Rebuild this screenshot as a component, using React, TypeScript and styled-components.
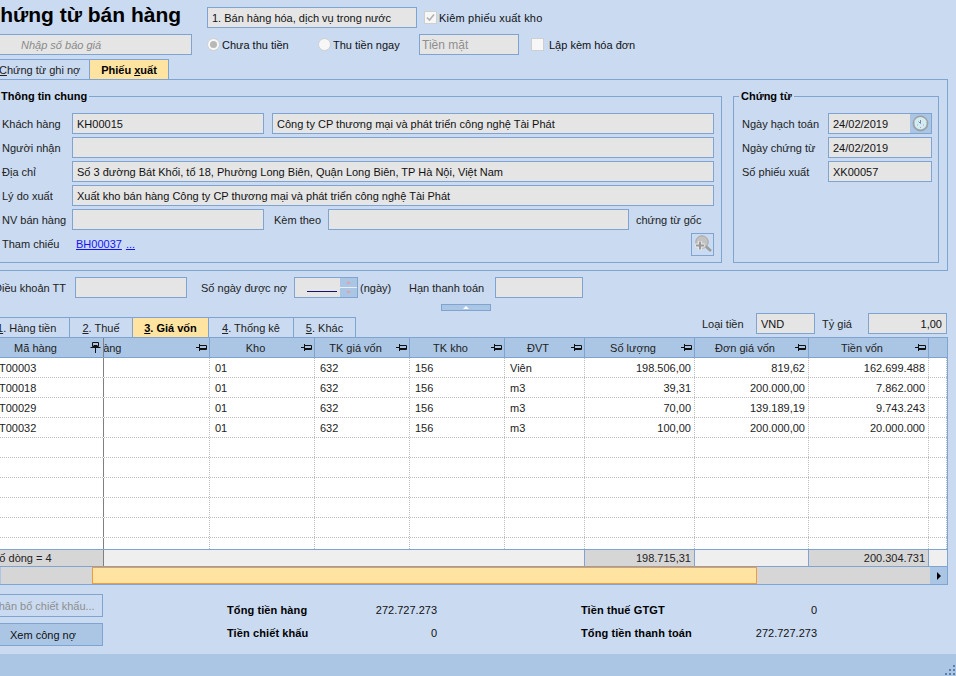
import React from "react";
import styled, { createGlobalStyle } from "styled-components";

const BG = "#c9daf1";
const BLUE = "#abc6e5";
const LINE = "#7fa4d2";
const FIELD = "#e5e5e5";
const YELLOW = "#ffe3a0";

const Global = createGlobalStyle`
  html, body { margin: 0; padding: 0; background: ${BG}; }
  * { box-sizing: border-box; }
  body { font-family: "Liberation Sans", Arial, sans-serif; font-size: 11px; color: #111; }
`;

const Page = styled.div`
  width: 956px; height: 676px; overflow: hidden; display: flex; flex-direction: column; background: ${BG};
`;
const Main = styled.div`
  flex: 1; width: 976px; margin-left: -20px; display: flex; flex-direction: column;
`;
const TopRow = styled.div<{ $mt: number }>`
  display: flex; align-items: center; height: 21px; margin-top: ${p => p.$mt}px; flex: none;
`;
const Title = styled.h1`
  width: 227px; margin: -5px 0 0; padding-left: 5px; font-size: 21px; font-weight: 700; color: #000; line-height: 24px; white-space: nowrap;
`;
const Field = styled.div<{ $w: number; $align?: string; $ml?: number }>`
  flex: none; width: ${p => p.$w}px; height: 21px; margin-left: ${p => p.$ml ?? 0}px; padding: 1px 4px 0;
  background: ${FIELD}; border: 1px solid ${LINE}; display: flex; align-items: center;
  justify-content: ${p => p.$align ?? "flex-start"}; white-space: nowrap; overflow: hidden;
`;
const GhostField = styled(Field)`
  color: #8a8a8a; font-style: italic; padding-left: 40px;
`;
const GreyField = styled(Field)`
  color: #8f8f8f; padding-left: 2px; font-size: 12px;
`;
const Box = styled.span<{ $ml: number; $round?: boolean }>`
  flex: none; width: 13px; height: 13px; margin-left: ${p => p.$ml}px; border: 1px solid #cfcfcf;
  background: #f7f7f7; border-radius: ${p => (p.$round ? "50%" : "0")}; display: flex; align-items: center; justify-content: center;
`;
const Dot = styled.span`
  width: 7px; height: 7px; border-radius: 50%; background: #b8b8b8;
`;
const Opt = styled.span<{ $ml: number; $w?: number; $wide?: boolean }>`
  margin-left: ${p => p.$ml}px; padding-top: 1px; white-space: nowrap; ${p => (p.$w ? `width: ${p.$w}px; flex: none;` : "")}
  ${p => (p.$wide ? "letter-spacing: 0.2px;" : "")}
`;
const TabStrip = styled.div`
  display: flex; align-items: flex-end; height: 19px; margin-top: 5px; flex: none;
`;
const Tab = styled.div<{ $w: number; $on?: boolean; $pl?: number }>`
  flex: none; width: ${p => p.$w}px; height: 20px; margin-right: -1px; padding-left: ${p => p.$pl ?? 0}px;
  display: flex; align-items: center; justify-content: ${p => (p.$pl ? "flex-start" : "center")};
  border: 1px solid ${LINE}; border-bottom: none; white-space: nowrap;
  background: ${p => (p.$on ? YELLOW : BG)}; font-weight: ${p => (p.$on ? 700 : 400)}; color: ${p => (p.$on ? "#000" : "#222")};
  u { text-underline-offset: 1px; }
`;
const Panel = styled.section`
  flex: none; width: 968px; height: 192px; display: flex; gap: 11px; padding: 9px 7px 0 9px; border: 1px solid ${LINE};
`;
const Group = styled.fieldset<{ $w: number; $pl: number }>`
  flex: none; width: ${p => p.$w}px; height: 174px; margin: 0; padding: 10px 7px 0 ${p => p.$pl}px; border: 1px solid ${LINE};
  display: flex; flex-direction: column; gap: 3px; min-width: 0;
`;
const Legend = styled.legend`
  margin-left: -3px; padding: 0 2px; font-weight: 700; line-height: 14px; color: #000; font-size: 11px;
`;
const FormRow = styled.div`
  display: flex; align-items: center; height: 21px; flex: none;
`;
const Label = styled.span<{ $w: number; $ml?: number; $right?: boolean }>`
  flex: none; width: ${p => p.$w}px; margin-left: ${p => p.$ml ?? 0}px; padding-top: 1px; white-space: nowrap; color: #222;
  ${p => (p.$right ? "text-align: right; padding-right: 9px;" : "")}
`;
const LinkA = styled.a<{ $ml: number }>`
  margin-left: ${p => p.$ml}px; color: #1414f0; text-decoration: underline; cursor: pointer;
`;
const IconBtn = styled.button`
  flex: none; width: 23px; height: 23px; margin-left: auto; margin-top: 1px; padding: 0; background: ${BG}; border: 1px solid ${LINE};
  display: flex; align-items: center; justify-content: center;
`;
const ClockBtn = styled.span`
  flex: none; width: 21px; height: 19px; margin: -1px -4px 0 auto; background: ${BLUE}; display: flex; align-items: center; justify-content: center;
`;
const Spin = styled.div`
  flex: none; width: 64px; height: 21px; margin-left: 12px; background: ${FIELD}; border: 1px solid ${LINE}; display: flex;
`;
const SpinValue = styled.div`
  flex: 1; display: flex; align-items: flex-end; justify-content: flex-end; padding: 0 3px 5px 0;
`;
const SpinLine = styled.span`
  width: 30px; height: 1px; background: #14146e;
`;
const SpinButtons = styled.div`
  flex: none; width: 17px; display: flex; flex-direction: column; gap: 1px; background: #e8eff9;
`;
const SpinBtn = styled.span`
  flex: 1; background: ${BLUE}; display: flex; align-items: center; justify-content: center;
`;
const Collapse = styled.div`
  flex: none; width: 50px; height: 7px; margin: 6px 0 0 461px; background: ${BLUE}; border: 1px solid ${LINE}; display: flex; align-items: center; justify-content: center;
`;
const Tri = styled.span`
  width: 0; height: 0; border-left: 3px solid transparent; border-right: 3px solid transparent; border-bottom: 3px solid #fff;
`;
const TabBar = styled.div`
  flex: none; height: 24px; margin-top: 2px; display: flex; align-items: flex-end;
`;
const Extra = styled.div`
  flex: none; margin-left: auto; margin-right: 9px; align-self: flex-start; display: flex; align-items: center;
`;

const GridWrap = styled.div`
  flex: none; width: 968px; border: solid ${LINE}; border-width: 1px 1px 0 0;
`;
const cols = "124px 106px 105px 95px 95px 80px 110px 114px 120px 18px";
const HeadRow = styled.div`
  display: grid; grid-template-columns: ${cols}; height: 20px; background: ${BLUE}; border-bottom: 1px solid ${LINE};
`;
const Head = styled.div<{ $frozen?: boolean; $last?: boolean }>`
  display: flex; align-items: center; padding-right: 2px; overflow: hidden; color: #222;
  border-right: ${p => (p.$last ? "none" : `1px solid ${p.$frozen ? "#808080" : LINE}`)};
  ${p => (p.$frozen ? "padding-left: 1px;" : "")}
`;
const HeadText = styled.span<{ $clip?: boolean }>`
  white-space: nowrap; text-align: center; ${p => (p.$clip ? "flex: 1 0 auto; margin-left: -29px; text-align: left;" : "flex: 1;")}
`;
const Rows = styled.div`
  height: 191px; background: #fff; overflow: hidden;
`;
const DataRow = styled.div`
  display: grid; grid-template-columns: ${cols}; height: 20px; border-bottom: 1px dotted #bdbdbd;
`;
const Cell = styled.div<{ $right?: boolean; $frozen?: boolean; $first?: boolean }>`
  display: flex; align-items: center; white-space: nowrap; overflow: hidden; color: #222;
  justify-content: ${p => (p.$right ? "flex-end" : "flex-start")};
  padding: ${p => (p.$right ? "0 3px 0 0" : p.$first ? "0 0 0 11px" : "0 0 0 5px")};
  border-right: ${p => (p.$frozen ? "1px solid #808080" : "1px dotted #bdbdbd")};
`;
const FootRow = styled.div`
  display: grid; grid-template-columns: ${cols}; height: 17px; background: #efefef; border-top: 1px solid ${LINE};
`;
const FootCell = styled.div<{ $sum?: boolean; $first?: boolean }>`
  display: flex; align-items: center; white-space: nowrap; overflow: hidden; color: #222;
  justify-content: ${p => (p.$first ? "flex-start" : "flex-end")};
  padding: ${p => (p.$first ? "0 0 0 12px" : "0 3px 0 0")};
  background: ${p => (p.$sum ? "#d6d6d6" : "transparent")};
  border-right: 1px solid ${p => (p.$first ? "#808080" : p.$sum ? LINE : "transparent")};
  box-shadow: ${p => (p.$sum && !p.$first ? `-1px 0 0 ${LINE}` : "none")};
`;
const Scroll = styled.div`
  display: flex; height: 19px; background: #d6d6d6; border: solid ${LINE}; border-width: 1px 0 1px 0;
`;
const ScrollStart = styled.span`
  flex: none; width: 21px; background: ${BLUE};
`;
const ScrollGap = styled.span`
  flex: none; width: 91px;
`;
const Thumb = styled.span`
  flex: none; width: 665px; background: ${YELLOW}; border: 1px solid #f59a3c;
`;
const ScrollEnd = styled.span`
  flex: none; width: 17px; margin-left: auto; background: ${BLUE}; display: flex; align-items: center; justify-content: center;
`;
const ArrowRight = styled.span`
  width: 0; height: 0; border-top: 4px solid transparent; border-bottom: 4px solid transparent; border-left: 4px solid #000;
`;

const Bottom = styled.div`
  flex: none; display: flex; padding-top: 9px;
`;
const Buttons = styled.div`
  flex: none; margin-left: 3px; width: 120px; display: flex; flex-direction: column; gap: 6px;
`;
const Btn = styled.button<{ $on?: boolean }>`
  height: 23px; padding: 0; font: inherit; white-space: nowrap; border: 1px solid ${LINE};
  background: ${p => (p.$on ? BLUE : BG)}; color: ${p => (p.$on ? "#111" : "#8f8f8f")};
`;
const Totals = styled.div<{ $ml: number; $w: number }>`
  flex: none; width: ${p => p.$w}px; margin-left: ${p => p.$ml}px; margin-top: 8px; display: flex; flex-direction: column; gap: 7px;
`;
const TotalRow = styled.div`
  display: flex; justify-content: space-between; height: 16px; align-items: center;
`;
const TotalLabel = styled.b`
  color: #000; white-space: nowrap; letter-spacing: 0.1px;
`;
const Status = styled.div`
  flex: none; height: 22px; background: ${BLUE}; display: flex; justify-content: flex-end; align-items: flex-end;
`;

const Check = () => (
  <svg width="11" height="11" viewBox="0 0 11 11"><path d="M2 5.5 L4.5 8 L9 2.5" fill="none" stroke="#b0b0b0" strokeWidth="1.6" /></svg>
);
const PinH = () => (
  <svg width="11" height="11" viewBox="0 0 11 11" style={{ flex: "none" }}>
    <path d="M0 5.5H3M3.5 2V9M3.5 3.5H10.5V7.5H3.5M4 6.5H10" fill="none" stroke="#111" strokeWidth="1" />
  </svg>
);
const PinV = () => (
  <svg width="11" height="11" viewBox="0 0 11 11" style={{ flex: "none" }}>
    <path d="M2.5 .5H8.5V4.5H2.5ZM3.5 3.5H7.5M.5 5.5H10.5M5.5 6V11" fill="none" stroke="#111" strokeWidth="1" />
  </svg>
);
const Clock = () => (
  <svg width="17" height="17" viewBox="0 0 17 17">
    <circle cx="8.5" cy="8.5" r="7" fill="#cfeef3" stroke="#9aa2a8" strokeWidth="1.8" />
    <path d="M2.5 6.5A6.5 6.5 0 0 1 14.5 6.5" fill="none" stroke="#e8e8e8" strokeWidth="1" />
    <path d="M8.5 5V8.5L6.5 6.5" fill="none" stroke="#7d8aa0" strokeWidth="1" />
    <path d="M5 10h1M11 10h1M8 12.5h1" stroke="#e88aa8" strokeWidth="1" />
  </svg>
);
const ZoomPlus = () => (
  <svg width="20" height="18" viewBox="0 0 20 18">
    <circle cx="9" cy="7" r="6.2" fill="#c2c2c2" stroke="#a6a6a6" />
    <path d="M13 11.5L18 16" stroke="#9c9c9c" strokeWidth="2.6" />
    <path d="M7 6V15M2.5 10.5H11.5" stroke="#ededed" strokeWidth="4" />
    <path d="M7 6.5V14.5M3 10.5H11" stroke="#9a9a9a" strokeWidth="2.2" />
  </svg>
);
const SpinArrow = ({ up }: { up?: boolean }) => (
  <svg width="5" height="3" viewBox="0 0 5 3"><path d={up ? "M2.5 0L5 3H0Z" : "M0 0H5L2.5 3Z"} fill="#d7a7ac" /></svg>
);
const Grip = () => (
  <svg width="12" height="12" viewBox="0 0 12 12" fill="#5f7fa8">
    <rect x="9" y="1" width="2" height="2" /><rect x="5" y="5" width="2" height="2" /><rect x="9" y="5" width="2" height="2" />
    <rect x="1" y="9" width="2" height="2" /><rect x="5" y="9" width="2" height="2" /><rect x="9" y="9" width="2" height="2" />
  </svg>
);

const headers = ["Tên hàng", "Kho", "TK giá vốn", "TK kho", "ĐVT", "Số lượng", "Đơn giá vốn", "Tiền vốn"];
const data = [
  ["HT00003", "", "01", "632", "156", "Viên", "198.506,00", "819,62", "162.699.488"],
  ["HT00018", "", "01", "632", "156", "m3", "39,31", "200.000,00", "7.862.000"],
  ["HT00029", "", "01", "632", "156", "m3", "70,00", "139.189,19", "9.743.243"],
  ["HT00032", "", "01", "632", "156", "m3", "100,00", "200.000,00", "20.000.000"],
  ...Array.from({ length: 6 }, () => ["", "", "", "", "", "", "", "", ""]),
];

export default function App() {
  return (
    <Page>
      <Global />
      <Main>
        <TopRow $mt={7}>
          <Title>Chứng từ bán hàng</Title>
          <Field $w={210}>1. Bán hàng hóa, dịch vụ trong nước</Field>
          <Box $ml={7}><Check /></Box>
          <Opt $ml={2} $wide>Kiêm phiếu xuất kho</Opt>
        </TopRow>
        <TopRow $mt={6}>
          <GhostField $w={212}>Nhập số báo giá</GhostField>
          <Box $ml={15} $round><Dot /></Box>
          <Opt $ml={2} $w={83}>Chưa thu tiền</Opt>
          <Box $ml={13} $round />
          <Opt $ml={2} $w={86}>Thu tiền ngay</Opt>
          <GreyField $w={100}>Tiền mặt</GreyField>
          <Box $ml={12} />
          <Opt $ml={5}>Lập kèm hóa đơn</Opt>
        </TopRow>
        <TabStrip>
          <Tab $w={110} $pl={18}><span><u>C</u>hứng từ ghi nợ</span></Tab>
          <Tab $w={80} $on><span>Phiếu <u>x</u>uất</span></Tab>
        </TabStrip>
        <Panel>
          <Group $w={732} $pl={11}>
            <Legend>Thông tin chung</Legend>
            <FormRow><Label $w={70}>Khách hàng</Label><Field $w={192}>KH00015</Field><Field $w={442} $ml={8}>Công ty CP thương mại và phát triển công nghệ Tài Phát</Field></FormRow>
            <FormRow><Label $w={70}>Người nhận</Label><Field $w={642} /></FormRow>
            <FormRow><Label $w={70}>Địa chỉ</Label><Field $w={642}>Số 3 đường Bát Khối, tổ 18, Phường Long Biên, Quận Long Biên, TP Hà Nội, Việt Nam</Field></FormRow>
            <FormRow><Label $w={70}>Lý do xuất</Label><Field $w={642}>Xuất kho bán hàng Công ty CP thương mại và phát triển công nghệ Tài Phát</Field></FormRow>
            <FormRow><Label $w={70}>NV bán hàng</Label><Field $w={192} /><Label $w={54} $ml={10}>Kèm theo</Label><Field $w={301} /><Label $w={78} $ml={7}>chứng từ gốc</Label></FormRow>
            <FormRow>
              <Label $w={70}>Tham chiếu</Label>
              <LinkA $ml={4}>BH00037</LinkA><LinkA $ml={4}>...</LinkA>
              <IconBtn><ZoomPlus /></IconBtn>
            </FormRow>
          </Group>
          <Group $w={206} $pl={8}>
            <Legend>Chứng từ</Legend>
            <FormRow><Label $w={86}>Ngày hạch toán</Label><Field $w={104}>24/02/2019<ClockBtn><Clock /></ClockBtn></Field></FormRow>
            <FormRow><Label $w={86}>Ngày chứng từ</Label><Field $w={104}>24/02/2019</Field></FormRow>
            <FormRow><Label $w={86}>Số phiếu xuất</Label><Field $w={104}>XK00057</Field></FormRow>
          </Group>
        </Panel>
        <TopRow $mt={6}>
          <Label $w={95} $right>Điều khoản TT</Label>
          <Field $w={112} />
          <Label $w={81} $ml={14}>Số ngày được nợ</Label>
          <Spin>
            <SpinValue><SpinLine /></SpinValue>
            <SpinButtons><SpinBtn><SpinArrow up /></SpinBtn><SpinBtn><SpinArrow /></SpinBtn></SpinButtons>
          </Spin>
          <Label $w={49} $ml={2}>(ngày)</Label>
          <Label $w={86}>Hạn thanh toán</Label>
          <Field $w={88} />
        </TopRow>
        <Collapse><Tri /></Collapse>
        <TabBar>
          <Tab $w={90} $pl={16}><span><u>1</u>. Hàng tiền</span></Tab>
          <Tab $w={64}><span><u>2</u>. Thuế</span></Tab>
          <Tab $w={77} $on><span><u>3</u>. Giá vốn</span></Tab>
          <Tab $w={86}><span><u>4</u>. Thống kê</span></Tab>
          <Tab $w={63}><span><u>5</u>. Khác</span></Tab>
          <Extra>
            <Label $w={54}>Loại tiền</Label>
            <Field $w={59}>VND</Field>
            <Label $w={46} $ml={7}>Tỷ giá</Label>
            <Field $w={79} $align="flex-end">1,00</Field>
          </Extra>
        </TabBar>
        <GridWrap>
          <HeadRow>
            <Head $frozen><HeadText>Mã hàng</HeadText><PinV /></Head>
            {headers.map((h, i) => (
              <Head key={h}>
                <HeadText $clip={i === 0}>{h}</HeadText>
                <PinH />
              </Head>
            ))}
            <Head $last />
          </HeadRow>
          <Rows>
            {data.map((r, i) => (
              <DataRow key={i}>
                {r.map((c, j) => (
                  <Cell key={j} $first={j === 0} $frozen={j === 0} $right={j >= 6}>{c}</Cell>
                ))}
                <Cell />
              </DataRow>
            ))}
          </Rows>
          <FootRow>
            <FootCell $first $sum>Số dòng = 4</FootCell>
            <FootCell /><FootCell /><FootCell /><FootCell /><FootCell />
            <FootCell $sum>198.715,31</FootCell>
            <FootCell />
            <FootCell $sum>200.304.731</FootCell>
            <FootCell />
          </FootRow>
          <Scroll>
            <ScrollStart />
            <ScrollGap />
            <Thumb />
            <ScrollEnd><ArrowRight /></ScrollEnd>
          </Scroll>
        </GridWrap>
        <Bottom>
          <Buttons>
            <Btn>Phân bổ chiết khấu...</Btn>
            <Btn $on>Xem công nợ</Btn>
          </Buttons>
          <Totals $ml={124} $w={210}>
            <TotalRow><TotalLabel>Tổng tiền hàng</TotalLabel><span>272.727.273</span></TotalRow>
            <TotalRow><TotalLabel>Tiền chiết khấu</TotalLabel><span>0</span></TotalRow>
          </Totals>
          <Totals $ml={144} $w={236}>
            <TotalRow><TotalLabel>Tiền thuế GTGT</TotalLabel><span>0</span></TotalRow>
            <TotalRow><TotalLabel>Tổng tiền thanh toán</TotalLabel><span>272.727.273</span></TotalRow>
          </Totals>
        </Bottom>
      </Main>
      <Status><Grip /></Status>
    </Page>
  );
}
